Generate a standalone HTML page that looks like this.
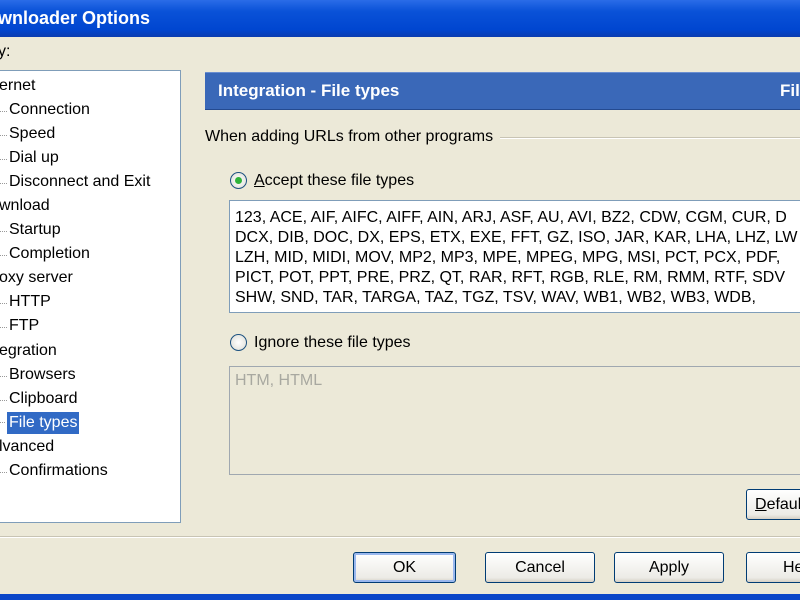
<!DOCTYPE html>
<html><head><style>
body{margin:0;width:800px;height:600px;overflow:hidden;background:#ece9d8;font-family:"Liberation Sans",sans-serif;font-size:16px;color:#000;position:relative}
.abs{position:absolute}
#title{left:0;top:0;width:800px;height:37px;background:linear-gradient(#2a6ce8,#0a52d8 30%,#0046d0 80%,#0a3cb0);color:#fff;font-weight:bold;font-size:18px}
#title span{position:absolute;left:-2px;top:8px}
#tree{left:-2px;top:70px;width:181px;height:451px;background:#fff;border:1px solid #7f9db9}
.ti{position:absolute;white-space:nowrap}
.ch{left:10px}
.ch:before{content:"";position:absolute;left:-10px;top:10px;width:8px;border-top:1px dotted #999}
#hdr{left:205px;top:72px;width:600px;height:36px;background:#3a68b8;border-top:1px solid #6a8ed0;border-bottom:1px solid #244a90;color:#fff;font-weight:bold;font-size:17px}
.radio{width:15px;height:15px;border:1px solid #1c5180;border-radius:50%;background:radial-gradient(#fff,#dcdcd4)}
.box{background:#fff;border:1px solid #7f9db9}
.btn{height:29px;border:1px solid #003c74;border-radius:3px;background:linear-gradient(#fff,#ecebe6 85%,#d6d0c5);text-align:center;line-height:29px;font-size:16px}
</style></head><body>
<div id="title" class="abs"><span>wnloader Options</span></div>
<div class="abs" style="left:-2px;top:43px">y:</div>
<div id="tree" class="abs">
<div class="ti" style="left:0;top:6px">ernet</div>
<div class="ti ch" style="top:30px">Connection</div>
<div class="ti ch" style="top:54px">Speed</div>
<div class="ti ch" style="top:78px">Dial up</div>
<div class="ti ch" style="top:102px">Disconnect and Exit</div>
<div class="ti" style="left:0;top:126px">wnload</div>
<div class="ti ch" style="top:150px">Startup</div>
<div class="ti ch" style="top:174px">Completion</div>
<div class="ti" style="left:0;top:198px">oxy server</div>
<div class="ti ch" style="top:222px">HTTP</div>
<div class="ti ch" style="top:246px">FTP</div>
<div class="ti" style="left:0;top:271px">egration</div>
<div class="ti ch" style="top:295px">Browsers</div>
<div class="ti ch" style="top:319px">Clipboard</div>
<div class="ti ch" style="top:341px;background:#316ac5;color:#fff;padding:2px 2px;left:8px">File types</div>
<div class="ti" style="left:0;top:367px">lvanced</div>
<div class="ti ch" style="top:391px">Confirmations</div>
</div>
<div id="hdr" class="abs"><span style="position:absolute;left:13px;top:8px">Integration - File types</span><span style="position:absolute;left:575px;top:8px">File</span></div>
<div class="abs" style="left:205px;top:128px">When adding URLs from other programs</div>
<div class="abs" style="left:500px;top:137px;width:300px;border-top:1px solid #c8c4b4;border-bottom:1px solid #fff"></div>
<div class="abs radio" style="left:230px;top:172px"><div style="position:absolute;left:4px;top:4px;width:7px;height:7px;border-radius:50%;background:#2fb33a"></div></div>
<div class="abs" style="left:254px;top:172px"><u>A</u>ccept these file types</div>
<div class="abs box" style="left:229px;top:200px;width:580px;height:111px;font-size:16px;white-space:nowrap;overflow:hidden"><div style="padding:7px 0 0 5px;line-height:20px">123, ACE, AIF, AIFC, AIFF, AIN, ARJ, ASF, AU, AVI, BZ2, CDW, CGM, CUR, D<br>DCX, DIB, DOC, DX, EPS, ETX, EXE, FFT, GZ, ISO, JAR, KAR, LHA, LHZ, LW<br>LZH, MID, MIDI, MOV, MP2, MP3, MPE, MPEG, MPG, MSI, PCT, PCX, PDF,<br>PICT, POT, PPT, PRE, PRZ, QT, RAR, RFT, RGB, RLE, RM, RMM, RTF, SDV<br>SHW, SND, TAR, TARGA, TAZ, TGZ, TSV, WAV, WB1, WB2, WB3, WDB,</div></div>
<div class="abs radio" style="left:230px;top:334px"></div>
<div class="abs" style="left:254px;top:334px">I<u>g</u>nore these file types</div>
<div class="abs" style="left:229px;top:366px;width:580px;height:107px;border:1px solid #a0a8b0;background:#ece9d8;color:#a8a8a0"><div style="padding:5px 0 0 5px">HTM, HTML</div></div>
<div class="abs btn" style="left:746px;top:489px;width:70px;text-align:left;padding-left:8px"><u>D</u>efault</div>
<div class="abs" style="left:0;top:536px;width:800px;border-top:1px solid #c8c4b4;border-bottom:1px solid #fff"></div>
<div class="abs btn" style="left:353px;top:552px;width:101px;box-shadow:inset 0 0 0 2px #9ab8ee">OK</div>
<div class="abs btn" style="left:485px;top:552px;width:108px">Cancel</div>
<div class="abs btn" style="left:614px;top:552px;width:108px">Apply</div>
<div class="abs btn" style="left:746px;top:552px;width:100px;text-align:left;padding-left:36px">Help</div>
<div class="abs" style="left:0;top:594px;width:800px;height:6px;background:#0a46c8"></div>
</body></html>
